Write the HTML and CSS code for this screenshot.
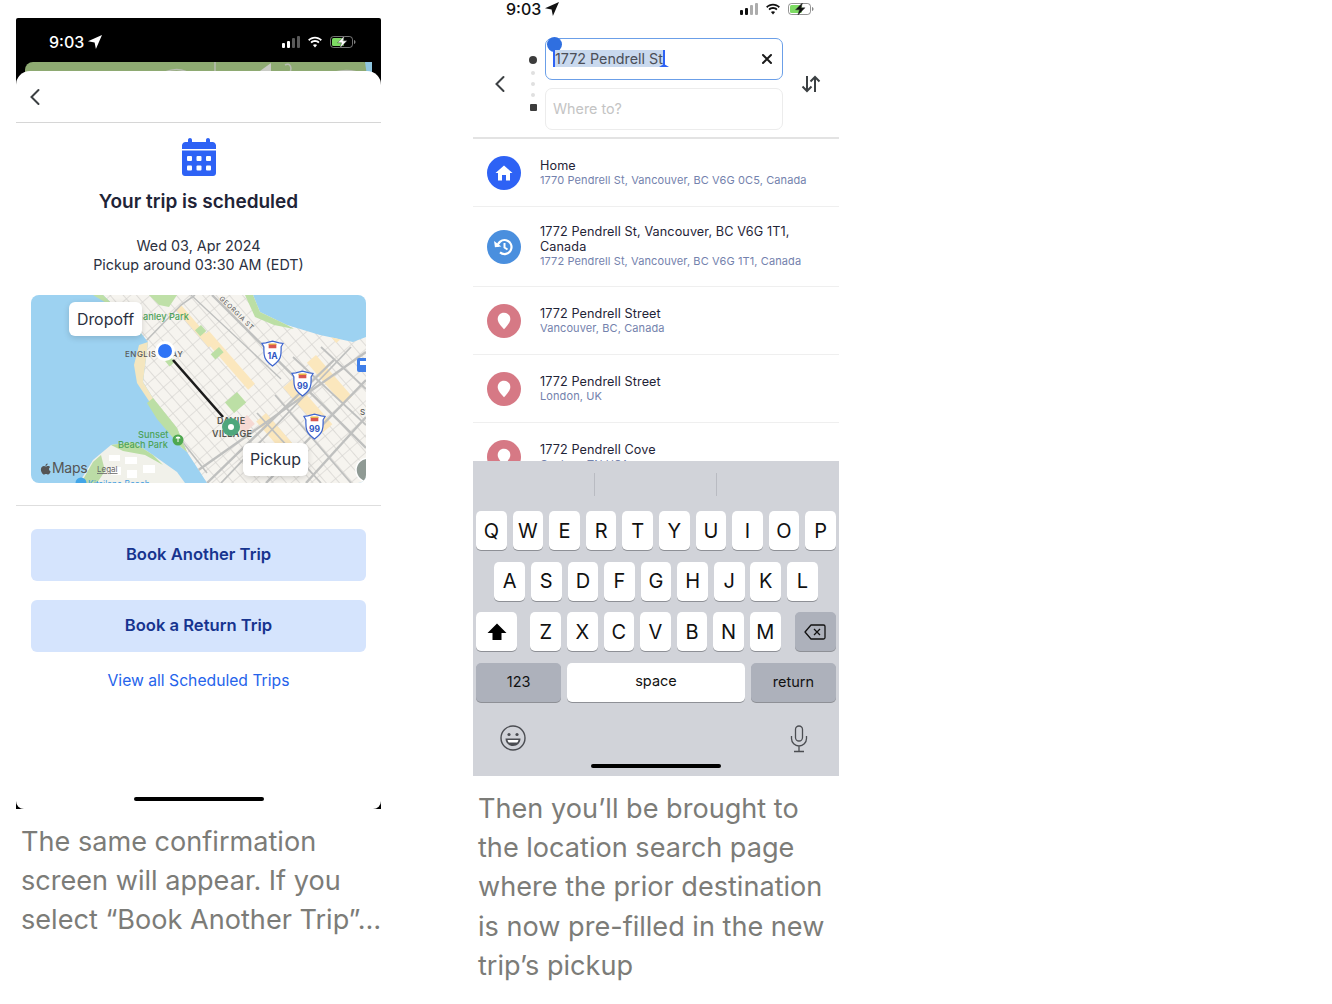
FILE: index.html
```html
<!DOCTYPE html>
<html lang="en">
<head>
  <meta charset="UTF-8" />
  <title>Trip booking walkthrough</title>
  <meta name="viewport" content="width=device-width, initial-scale=1.0"/>
  <link rel="stylesheet" href="styles.css">
</head>
<body>

  <svg class="defs" width="0" height="0">
    <symbol id="arrow" viewBox="0 0 14 14"><path d="M14 0 7.900 14 6.600 7.400 0 6.200z" fill="currentColor"/></symbol>
    <symbol id="wifi" viewBox="0 0 16 12">
      <path d="M8 2.600c2.200 0 4.200.9 5.700 2.300l1.200-1.300C13.100 1.900 10.700.8 8 .8S2.900 1.900 1.100 3.600l1.200 1.300C3.800 3.500 5.800 2.600 8 2.600z" fill="currentColor"/>
      <path d="M8 5.900c1.300 0 2.400.5 3.300 1.300l1.200-1.300C11.300 4.800 9.700 4.100 8 4.100s-3.300.7-4.500 1.800l1.200 1.300c.9-.8 2-1.300 3.300-1.300z" fill="currentColor"/>
      <path d="M8 11.400l2.100-2.300C9.500 8.600 8.800 8.300 8 8.300s-1.500.3-2.100.8z" fill="currentColor"/>
    </symbol>
    <symbol id="battery" viewBox="0 0 26 12">
      <rect x=".5" y=".5" width="22" height="11" rx="3" fill="none" stroke="currentColor" stroke-opacity=".45"/>
      <rect x="2" y="2" width="12" height="8" rx="1.500" fill="#7ddb63"/>
      <path d="M24 4v4c.9-.3 1.500-1.100 1.500-2S24.900 4.300 24 4z" fill="currentColor" fill-opacity=".5"/>
      <path d="M14.500-.2 7.500 6.800h4l-1.700 5.400 7.200-7.400h-4z" fill="currentColor" stroke="#3b3b3b" stroke-width=".5"/>
    </symbol>
    <symbol id="pin" viewBox="0 0 16 20"><path d="M8 .6C3.800.6.800 3.700.8 7.600c0 3.900 3.700 8 7.200 11.800 3.500-3.800 7.200-7.900 7.200-11.800C15.200 3.700 12.200.6 8 .6z" fill="#fff"/></symbol>
    <symbol id="shield" viewBox="0 0 24 28">
      <path d="M1 3.500 5 3l7-2 7 2 4 .5-2 3.500c0 8 1 13-9 20C2 20 3 15 3 7z" fill="#fff" stroke="#3f66cf" stroke-width="1.300"/>
      <path d="M8 4h8v4.500H8z" fill="#d9564f"/>
      <path d="M8 3.500h8v1.500H8z" fill="#e9b949"/>
    </symbol>
  </svg>

  <main class="page">

    <section class="column column-left">
      <div class="phone phone-dark">
        <div class="status status-light">
          <span class="clock">9:03</span>
          <svg class="status-arrow"><use href="#arrow"/></svg>
          <span class="status-right">
            <span class="signal"><i></i><i></i><i class="off"></i><i class="off"></i></span>
            <svg class="wifi"><use href="#wifi"/></svg>
            <svg class="battery"><use href="#battery"/></svg>
          </span>
        </div>
        <svg class="map-strip" viewBox="0 0 347 25" width="347" height="25">
          <rect width="347" height="25" rx="8" fill="#8eaa72"/>
          <path d="M140 10c10-4 20-3 28 4M190 0v14M240 9l-12 5M260 3c5-3 8 3 4 9M310 10c10-3 20-2 32 3" fill="none" stroke="#b8bdb2" stroke-width="1.500"/>
          <path d="M228 14 246 1v13z" fill="#c9cbc5"/>
          <path d="M340 0h7v14h-5z" fill="#8fc6e0"/>
        </svg>
        <div class="sheet">
          <div class="sheet-nav">
            <svg class="chevron" viewBox="0 0 12 18"><path d="M9.500 2 2.500 9l7 7" fill="none" stroke="#3c4043" stroke-width="2" stroke-linecap="round"/></svg>
          </div>

          <div class="confirm">
            <svg class="calendar" viewBox="0 0 34 38">
              <path d="M8 0c1.100 0 2 .9 2 2v2h14V2c0-1.100.9-2 2-2s2 .9 2 2v2h2.500C32.400 4 34 5.600 34 7.500V11H0V7.500C0 5.600 1.600 4 3.500 4H6V2c0-1.100.9-2 2-2z" fill="#2e62f5"/>
              <path d="M0 12.500h34V35c0 1.700-1.300 3-3 3H3c-1.700 0-3-1.300-3-3z" fill="#2e62f5"/>
              <g fill="#fff">
                <rect x="5" y="18" width="5" height="5" rx="1"/><rect x="14.500" y="18" width="5" height="5" rx="1"/><rect x="24" y="18" width="5" height="5" rx="1"/>
                <rect x="5" y="27.500" width="5" height="5" rx="1"/><rect x="14.500" y="27.500" width="5" height="5" rx="1"/><rect x="24" y="27.500" width="5" height="5" rx="1"/>
              </g>
            </svg>
            <h1>Your trip is scheduled</h1>
            <p>Wed 03, Apr 2024<br>Pickup around 03:30 AM (EDT)</p>
          </div>

          <div class="map">
            <svg viewBox="0 0 335 188" width="335" height="188">
              <defs>
                <pattern id="streets" width="13" height="10" patternUnits="userSpaceOnUse" patternTransform="rotate(49)">
                  <rect width="13" height="10" fill="#f6f4ef"/>
                  <path d="M0 0h13M0 0v10" stroke="#d6d5d1" stroke-width="1.300"/>
                </pattern>
                <clipPath id="land">
                  <path d="M72 0 106 33 117 47 112 87 122 103 146 133 156 157 169 177 176 188H335V42L322 47 289 40 256 30 229 17 222 0z"/>
                </clipPath>
              </defs>
              <rect width="335" height="188" fill="#9dd2f1"/>
              <path d="M72 0 106 33 117 47 112 87 122 103 146 133 156 157 169 177 176 188H335V42L322 47 289 40 256 30 229 17 222 0z" fill="url(#streets)"/>
              <path d="M48 188 62 165 80 150 102 147 122 160 146 177 154 188z" fill="#f1f1ea"/>
              <path d="M50 188 62 167 70 160 74 176 66 188z" fill="#bcdca6"/>
              <path d="M80 150 102 147 122 160 132 170 114 160 92 156z" fill="#b9dda2"/>
              <g fill="#fff">
                <rect x="78" y="160" width="11" height="6"/><rect x="94" y="162" width="12" height="7"/><rect x="80" y="172" width="10" height="8"/><rect x="112" y="170" width="12" height="8"/><rect x="96" y="175" width="10" height="8"/>
              </g>
              <path d="M72 0 106 33 111 42 92 18 62 0z" fill="#bfe0a8"/>
              <path d="M108 50 117 47 112 87 122 103 146 133 156 157 150 152 140 132 118 106 106 88 103 70z" fill="#f4e6bf"/>
              <path d="M122 103 146 133 156 157 148 150 126 124 116 108z" fill="#bcdfa5"/>
              <path d="M222 0 229 17 256 30 263 34 243 30 224 22 214 0z" fill="#bcdfa5"/>
              <path d="M118 0h28l-8 12-10-2z" fill="#bfe0a8"/>
              <g clip-path="url(#land)" fill="#fbe7bd">
                <rect x="285" y="60" width="55" height="12" transform="rotate(49 285 60)"/>
                <rect x="262" y="84" width="60" height="13" transform="rotate(49 262 84)"/>
                <rect x="235" y="118" width="60" height="13" transform="rotate(49 235 118)"/>
                <rect x="178" y="36" width="70" height="9" transform="rotate(49 178 36)"/>
                <rect x="150" y="10" width="50" height="7" transform="rotate(49 150 10)"/>
                <rect x="300" y="42" width="50" height="8" transform="rotate(-41 300 42)"/>
              </g>
              <g fill="#bcdfa5">
                <rect x="170" y="30" width="8" height="8" transform="rotate(49 170 30)"/>
                <rect x="188" y="52" width="7" height="11" transform="rotate(49 188 52)"/>
                <rect x="206" y="97" width="14" height="16" transform="rotate(49 206 97)"/>
                <rect x="138" y="60" width="9" height="7" transform="rotate(49 138 60)"/>
              </g>
              <rect x="216" y="120" width="12" height="14" fill="#f5d9d3" transform="rotate(49 216 120)"/>
              <g clip-path="url(#land)" fill="none" stroke="#bfc0bf" stroke-width="2.400">
                <path d="M181 0 335 153"/>
                <path d="M335 57 149 188"/>
                <path d="M303 65 176 188"/>
                <path d="M335 85 235 188"/>
                <path d="M335 122 275 188"/>
                <path d="M320 52 190 188" stroke-width="1.800"/>
                <path d="M262 62 335 130" stroke-width="1.800"/>
                <path d="M244 100 320 188" stroke-width="1.800"/>
                <path d="M226 118 290 188" stroke-width="1.800"/>
                <path d="M290 52 335 94" stroke-width="1.800"/>
                <path d="M110 48 106 86 150 145 176 178" stroke-width="1.600"/>
                <path d="M114 47 150 10 164 0" stroke-width="1.600"/>
                <path d="M160 0 250 84" stroke-width="1.400"/>
              </g>
              <path d="M142 65 192 122" stroke="#1c1c1c" stroke-width="2.600"/>

              <text class="map-road" transform="translate(188 4) rotate(44)">GEORGIA ST</text>
              <text class="map-park" x="112" y="25">anley Park</text>
              <text class="map-place" x="94" y="62">ENGLISH BAY</text>
              <text class="map-area" x="186" y="129">DAVIE</text>
              <text class="map-area" x="181" y="142">VILLAGE</text>
              <text class="map-park" x="107" y="143">Sunset</text>
              <text class="map-park" x="87" y="153">Beach Park</text>
              <text class="map-kits" x="57" y="192">Kitsilano Beach</text>
              <text class="map-place" x="329" y="120">ST</text>

              <circle cx="147" cy="145" r="5.500" fill="#4fa84f"/>
              <path d="M147 141.500a2.500 2 0 0 1 2.500 2h-2v3.500h-1v-3.500h-2a2.500 2 0 0 1 2.500-2z" fill="#fff"/>
              <circle cx="50" cy="188" r="5.500" fill="#42a5e8"/>
              <rect x="326" y="63" width="12" height="14" rx="2" fill="#3f7ee8"/>
              <rect x="329" y="66" width="6" height="4" fill="#fff"/>
              <circle cx="337" cy="175" r="12" fill="#8f9a94" stroke="#fff" stroke-width="1.500"/>

              <use href="#shield" x="230" y="45" width="23" height="27"/>
              <use href="#shield" x="260" y="75" width="23" height="27"/>
              <use href="#shield" x="272" y="118" width="23" height="27"/>
              <text class="map-shield" x="241.500" y="64">1A</text>
              <text class="map-shield" x="271.500" y="94">99</text>
              <text class="map-shield" x="283.500" y="137">99</text>

              <circle cx="134" cy="56" r="10" fill="#fff"/>
              <circle cx="134" cy="56" r="7" fill="#2f74f6"/>
              <circle cx="200" cy="132" r="9" fill="#4ea67c"/>
              <circle cx="200" cy="132" r="3" fill="#fff"/>

              <path d="M14.500 171.500c1 0 1.600-.6 2.500-.6 1 0 1.800.5 2.300 1.200-1.900 1-1.600 3.700.4 4.500-.5 1.300-1.500 3-2.600 3-.8 0-1.200-.5-2.100-.5s-1.400.5-2.100.5c-1.400 0-3-2.800-3-5 0-2.300 1.500-3.600 3-3.600.9 0 1.600.5 2.100.5z" fill="#555"/>
              <path d="M14.400 171c0-1.300.9-2.300 2.200-2.500.1 1.400-.9 2.400-2.200 2.500z" fill="#555"/>
              <text class="map-logo" x="21" y="178">Maps</text>
              <text class="map-legal" x="66" y="177">Legal</text>
            </svg>
            <span class="map-tag tag-dropoff">Dropoff</span>
            <span class="map-tag tag-pickup">Pickup</span>
          </div>

          <hr class="sheet-rule">

          <div class="actions">
            <a class="action" href="#another">Book Another Trip</a>
            <a class="action" href="#return">Book a Return Trip</a>
            <a class="view-all" href="#trips">View all Scheduled Trips</a>
          </div>

          <div class="home-bar"></div>
        </div>
      </div>
      <p class="caption caption-left">The same confirmation screen will appear. If you select “Book Another Trip”…</p>
    </section>

    <section class="column column-right">
      <div class="phone phone-search">
        <div class="status status-short">
          <span class="clock">9:03</span>
          <svg class="status-arrow"><use href="#arrow"/></svg>
          <span class="status-right">
            <span class="signal"><i></i><i></i><i class="off"></i><i class="off"></i></span>
            <svg class="wifi"><use href="#wifi"/></svg>
            <svg class="battery"><use href="#battery"/></svg>
          </span>
        </div>

        <div class="search">
          <svg class="chevron" viewBox="0 0 12 18"><path d="M9.500 2 2.500 9l7 7" fill="none" stroke="#3c4043" stroke-width="2" stroke-linecap="round"/></svg>
          <div class="route-dots"><i class="dot-start"></i><i></i><i></i><i></i><i class="dot-end"></i></div>
          <div class="fields">
            <div class="field field-active">
              <span class="handle"></span>
              <span class="selected">1772 Pendrell St</span>
              <svg class="clear" viewBox="0 0 12 12"><path d="M2 2l8 8M10 2l-8 8" stroke="#1a1a1a" stroke-width="2" stroke-linecap="round"/></svg>
            </div>
            <div class="field">Where to?</div>
          </div>
          <svg class="swap" viewBox="0 0 20 18"><path d="M6 1v15M1.500 11.500 6 16l4.500-4.500M14 17V2M9.500 6.500 14 2l4.500 4.500" fill="none" stroke="#3c4043" stroke-width="2"/></svg>
        </div>

        <ul class="places">
          <li class="place">
            <span class="place-icon icon-home">
              <svg viewBox="0 0 18 16" width="18" height="16"><path d="M9 .5 17.500 8H15v7.500h-4V10H7v5.500H3V8H.5z" fill="#fff"/></svg>
            </span>
            <div><b>Home</b><small>1770 Pendrell St, Vancouver, BC V6G 0C5, Canada</small></div>
          </li>
          <li class="place place-tall">
            <span class="place-icon icon-recent">
              <svg viewBox="0 0 20 20" width="20" height="20"><path d="M3.500 10A7 7 0 1 1 6 15.400" fill="none" stroke="#fff" stroke-width="2.200"/><path d="M.5 3.500v6.500H7z" fill="#fff" transform="rotate(-8 3 7)"/><path d="M10.500 6v4.500l3 2" fill="none" stroke="#fff" stroke-width="2"/></svg>
            </span>
            <div><b>1772 Pendrell St, Vancouver, BC V6G 1T1, Canada</b><small>1772 Pendrell St, Vancouver, BC V6G 1T1, Canada</small></div>
          </li>
          <li class="place">
            <span class="place-icon icon-pin"><svg width="14" height="18"><use href="#pin"/></svg></span>
            <div><b>1772 Pendrell Street</b><small>Vancouver, BC, Canada</small></div>
          </li>
          <li class="place">
            <span class="place-icon icon-pin"><svg width="14" height="18"><use href="#pin"/></svg></span>
            <div><b>1772 Pendrell Street</b><small>London, UK</small></div>
          </li>
          <li class="place">
            <span class="place-icon icon-pin"><svg width="14" height="18"><use href="#pin"/></svg></span>
            <div><b>1772 Pendrell Cove</b><small>Goshen, TN USA</small></div>
          </li>
        </ul>

        <div class="keyboard">
          <div class="suggestions"><i></i><i></i></div>
          <div class="key-row">
            <span class="key">Q</span><span class="key">W</span><span class="key">E</span><span class="key">R</span><span class="key">T</span><span class="key">Y</span><span class="key">U</span><span class="key">I</span><span class="key">O</span><span class="key">P</span>
          </div>
          <div class="key-row key-row-home">
            <span class="key">A</span><span class="key">S</span><span class="key">D</span><span class="key">F</span><span class="key">G</span><span class="key">H</span><span class="key">J</span><span class="key">K</span><span class="key">L</span>
          </div>
          <div class="key-row">
            <span class="key key-shift">
              <svg viewBox="0 0 20 18" width="20" height="18"><path d="M10 .5 19.500 10H14.500v7h-9v-7H.5z" fill="#000"/></svg>
            </span>
            <span class="key">Z</span><span class="key">X</span><span class="key">C</span><span class="key">V</span><span class="key">B</span><span class="key">N</span><span class="key">M</span>
            <span class="key key-dark key-delete">
              <svg viewBox="0 0 22 16" width="22" height="16"><path d="M7 1h12.500A1.500 1.500 0 0 1 21 2.500v11a1.500 1.500 0 0 1-1.500 1.500H7L1 8z" fill="none" stroke="#111" stroke-width="1.300" stroke-linejoin="round"/><path d="M10 5l6 6M16 5l-6 6" stroke="#111" stroke-width="1.300"/></svg>
            </span>
          </div>
          <div class="key-row">
            <span class="key key-dark key-wide">123</span>
            <span class="key key-space">space</span>
            <span class="key key-dark key-wide">return</span>
          </div>
          <div class="keyboard-foot">
            <svg class="emoji" viewBox="0 0 26 26" width="26" height="26"><circle cx="13" cy="13" r="12" fill="none" stroke="#4b4d52" stroke-width="1.400"/><circle cx="9" cy="9.500" r="1.600" fill="#4b4d52"/><circle cx="17" cy="9.500" r="1.600" fill="#4b4d52"/><path d="M5.500 13.500h15c0 4.500-3.300 7.500-7.500 7.500s-7.500-3-7.500-7.500z" fill="#4b4d52"/><path d="M7.500 15h11c-.3 1.200-.8 2-1.300 2.500H8.800C8.300 17 7.800 16.200 7.500 15z" fill="#fff"/></svg>
            <svg class="mic" viewBox="0 0 18 28" width="18" height="28"><rect x="5.500" y="1" width="7" height="15" rx="3.500" fill="none" stroke="#4b4d52" stroke-width="1.300"/><path d="M1.500 11v2.500a7.500 7.500 0 0 0 15 0V11M9 21v5M4 26.500h10" fill="none" stroke="#4b4d52" stroke-width="1.300"/></svg>
          </div>
          <div class="home-bar home-bar-kb"></div>
        </div>
      </div>
      <p class="caption caption-right">Then you’ll be brought to the location search page where the prior destination is now pre-filled in the new trip’s pickup</p>
    </section>

  </main>

</body>
</html>
```

FILE: styles.css
```css
body {
  margin: 0;
  font-family: Inter, 'Noto Sans', sans-serif;
  background-color: white;
  color: #1f2437;
}

.defs {
  position: absolute;
}

.page {
  display: flex;
  height: 1004px;
  overflow: hidden;
}

.column-left {
  width: 365px;
  margin-left: 16px;
  padding-top: 18px;
}

.column-right {
  width: 366px;
  margin-left: 92px;
}

/* phone frames */

.phone-dark {
  height: 791px;
  background-color: black;
  border-radius: 2px 2px 0 0;
  display: flex;
  flex-direction: column;
}

.phone-search {
  height: 776px;
  display: flex;
  flex-direction: column;
  overflow: hidden;
}

.status {
  display: flex;
  align-items: center;
  padding: 0 25px 0 33px;
  font-size: 16px;
  font-weight: 500;
}

.status-light {
  height: 44px;
  padding-top: 4px;
  box-sizing: border-box;
  color: white;
}

.status-short {
  height: 18px;
  color: #111;
}

.clock {
  width: 36px;
}

.status-arrow {
  width: 14px;
  height: 14px;
  margin-left: 3px;
}

.status-right {
  margin-left: auto;
  display: flex;
  align-items: center;
  gap: 7px;
}

.signal {
  display: flex;
  align-items: flex-end;
  gap: 2px;
  height: 12px;
  margin-left: 1px;
}

.signal i {
  width: 3px;
  height: 5px;
  border-radius: 1px;
  background-color: currentColor;
}

.signal i:nth-child(2) { height: 7px; }
.signal i:nth-child(3) { height: 10px; }
.signal i:nth-child(4) { height: 12px; }
.signal .off { opacity: 0.35; }

.wifi {
  width: 16px;
  height: 12px;
}

.battery {
  width: 26px;
  height: 12px;
}

.map-strip {
  margin: 0 9px;
  flex: none;
}

/* confirmation sheet */

.sheet {
  flex: 1;
  margin-top: -16px;
  background-color: white;
  border-radius: 14px 14px 8px 8px;
  display: flex;
  flex-direction: column;
  position: relative;
}

.sheet-nav {
  height: 51px;
  display: flex;
  align-items: center;
  padding-left: 13px;
  border-bottom: 1px solid #d6d6d6;
  flex: none;
}

.chevron {
  width: 12px;
  height: 18px;
  flex: none;
}

.confirm {
  text-align: center;
  padding-top: 15px;
}

.calendar {
  display: block;
  width: 34px;
  height: 38px;
  margin: 0 auto;
}

.confirm h1 {
  font-size: 19px;
  font-weight: 600;
  line-height: 26px;
  margin: 13px 0 0;
}

.confirm p {
  font-size: 14.350px;
  line-height: 19px;
  margin: 21px 0 0;
  color: #2b3040;
}

.map {
  width: 335px;
  height: 188px;
  margin: 21px auto 0;
  border-radius: 8px;
  overflow: hidden;
  position: relative;
  flex: none;
}

.map svg {
  display: block;
}

.map text {
  font-family: Inter, sans-serif;
}

.map-road { font-size: 6.500px; fill: #555; letter-spacing: 0.6px; }
.map-park { font-size: 9.200px; fill: #4ea35a; font-weight: 500; }
.map-place { font-size: 8px; fill: #5a5a5a; letter-spacing: 0.5px; font-weight: 500; }
.map-area { font-size: 9px; fill: #55554f; font-weight: 600; letter-spacing: 0.4px; }
.map-kits { font-size: 8.500px; fill: #3f9be0; }
.map-logo { font-size: 14px; fill: #555; letter-spacing: -0.3px; }
.map-legal { font-size: 8px; fill: #666; text-decoration: underline; }
.map-shield { font-size: 8.500px; fill: #2f55c4; font-weight: 700; text-anchor: middle; }

.map-tag {
  position: absolute;
  background-color: white;
  border-radius: 6px;
  box-shadow: 0 2px 6px rgba(0,0,0,0.15);
  font-size: 15.900px;
  display: flex;
  align-items: center;
  justify-content: center;
  color: #2b3040;
}

.tag-dropoff {
  left: 38px;
  top: 7px;
  width: 73px;
  height: 34px;
}

.tag-pickup {
  left: 212px;
  top: 148px;
  width: 65px;
  height: 33px;
}

.sheet-rule {
  border: none;
  border-top: 1px solid #dedede;
  margin: 22px 0 0;
}

.actions {
  padding: 23px 15px 0;
  display: flex;
  flex-direction: column;
  gap: 19px;
}

.action {
  height: 52px;
  padding-bottom: 2px;
  box-sizing: border-box;
  background-color: #d5e4fd;
  border-radius: 6px;
  color: #17348f;
  font-size: 16.600px;
  font-weight: 600;
  text-decoration: none;
  display: flex;
  align-items: center;
  justify-content: center;
}

.view-all {
  color: #2563eb;
  font-size: 15.700px;
  text-align: center;
  text-decoration: none;
  margin-top: 0;
}

.home-bar {
  width: 130px;
  height: 4px;
  border-radius: 2px;
  background-color: black;
  margin: auto auto 8px;
}

/* captions */

.caption {
  font-size: 27.100px;
  line-height: 39.200px;
  color: #7c7c78;
  margin: 0;
}

.caption-left {
  padding: 13px 0 0 5px;
  width: 372px;
}

.caption-right {
  padding: 13px 0 0 5px;
}

/* search header */

.search {
  height: 121px;
  display: flex;
  align-items: center;
  padding: 12px 0 0 21px;
  border-bottom: 2px solid #e3e3e3;
  flex: none;
  box-sizing: border-box;
}

.route-dots {
  width: 8px;
  margin-left: 23px;
  display: flex;
  flex-direction: column;
  align-items: center;
  gap: 7px;
}

.route-dots i {
  width: 4px;
  height: 4px;
  border-radius: 50%;
  background-color: #e0e0e0;
}

.route-dots .dot-start {
  width: 8px;
  height: 8px;
  background-color: #3c3c3c;
}

.route-dots .dot-end {
  width: 7px;
  height: 7px;
  border-radius: 1px;
  background-color: #3c3c3c;
}

.fields {
  width: 238px;
  margin-left: 8px;
  display: flex;
  flex-direction: column;
  gap: 8px;
}

.field {
  height: 42px;
  box-sizing: border-box;
  border: 1px solid #ececec;
  border-radius: 7px;
  padding-left: 7px;
  display: flex;
  align-items: center;
  font-size: 14.300px;
  color: #c4c4c4;
  position: relative;
}

.field-active {
  border-color: #6b9fe8;
  color: #4b4f58;
}

.selected {
  background-color: #c9d9ee;
  border-left: 2px solid #2e62f5;
  border-right: 2px solid #2e62f5;
  line-height: 17px;
  position: relative;
}

/* little drag handle under the end of the selection */
.selected::after {
  content: "";
  position: absolute;
  right: -6px;
  bottom: 0;
  border: 5px solid transparent;
  border-top: none;
  border-bottom: 3px solid #2e62f5;
}

.handle {
  position: absolute;
  left: 1px;
  top: -2px;
  width: 15px;
  height: 15px;
  border-radius: 50%;
  background-color: #2f6fe0;
}

.clear {
  width: 12px;
  height: 12px;
  margin-left: auto;
  margin-right: 9px;
}

.swap {
  width: 20px;
  height: 18px;
  margin-left: 18px;
}

/* place list */

.places {
  list-style: none;
  margin: 0;
  padding: 0;
  flex: 1;
  overflow: hidden;
  min-height: 0;
}

.place {
  height: 68px;
  box-sizing: border-box;
  display: flex;
  align-items: center;
  gap: 19px;
  padding: 0 40px 0 14px;
  border-bottom: 1px solid #efefef;
}

.place-tall {
  height: 80px;
}

.place b {
  display: block;
  font-size: 12.650px;
  line-height: 15px;
  font-weight: 400;
  color: #1f2437;
  letter-spacing: 0.1px;
}

.place small {
  display: block;
  font-size: 11px;
  line-height: 15px;
  color: #7482ad;
  letter-spacing: 0.1px;
  white-space: nowrap;
}

.place-icon {
  width: 34px;
  height: 34px;
  border-radius: 50%;
  display: flex;
  align-items: center;
  justify-content: center;
  flex: none;
}

.icon-home { background-color: #2e62f5; }
.icon-recent { background-color: #4a8fde; }
.icon-pin { background-color: #d67985; }

/* keyboard */

.keyboard {
  height: 315px;
  flex: none;
  background-color: #d1d3d9;
  display: flex;
  flex-direction: column;
  padding: 0 3px;
  box-sizing: border-box;
}

.suggestions {
  height: 50px;
  display: flex;
  justify-content: center;
  gap: 121px;
  padding: 12px 2px 0 0;
  box-sizing: border-box;
  flex: none;
}

.suggestions i {
  width: 1px;
  height: 23px;
  background-color: #b9bbc2;
}

.key-row {
  display: flex;
  justify-content: center;
  gap: 5.900px;
  height: 39px;
  margin-bottom: 11.500px;
  flex: none;
}

.key {
  width: 30.700px;
  background-color: white;
  border-radius: 5px;
  box-shadow: 0 1px 0 #8e9096;
  font-size: 20px;
  color: #111;
  display: flex;
  align-items: center;
  justify-content: center;
}

.key-shift {
  width: 41px;
  margin-right: 7.500px;
}

.key-dark {
  background-color: #adb1bb;
}

.key-delete {
  width: 41px;
  margin-left: 8.500px;
}

.key-wide {
  width: 85px;
  font-size: 14.500px;
  padding-bottom: 1px;
  box-sizing: border-box;
}

.key-space {
  width: 178px;
  font-size: 14.500px;
  padding-bottom: 3px;
  box-sizing: border-box;
}

.keyboard-foot {
  display: flex;
  justify-content: space-between;
  padding: 12px 28px 0 24px;
  flex: none;
}

.home-bar-kb {
  margin: auto auto 8px;
}
```
